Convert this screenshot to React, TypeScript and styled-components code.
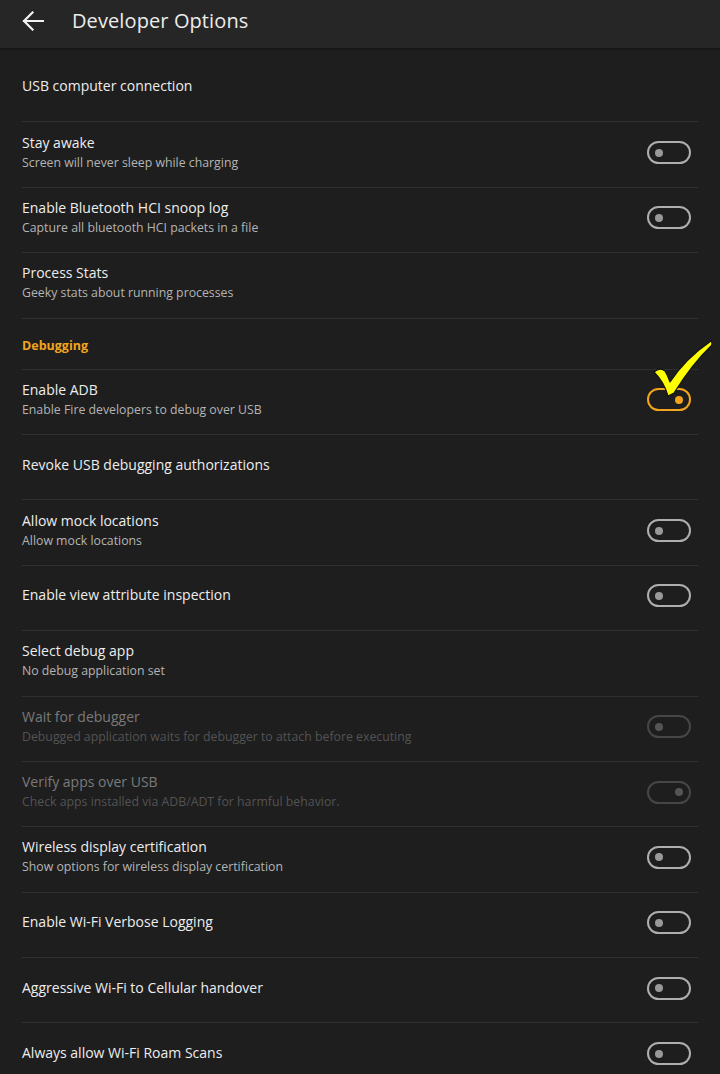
import React from "react";
import styled, { createGlobalStyle } from "styled-components";

const GlobalStyle = createGlobalStyle`
    html, body {
        margin: 0;
        padding: 0;
        background: #1e1e1e;
    }
    body {
        font-family: "Open Sans", "Noto Sans", sans-serif;
        -webkit-font-smoothing: antialiased;
    }
`

const Page = styled.div`
    width: 720px;
    height: 1074px;
    overflow: hidden;
    background: #1e1e1e;
`
const Header = styled.header`
    height: 48px;
    background: #262626;
    display: flex;
    align-items: center;
    box-shadow: 0 1px 2px rgba(0, 0, 0, 0.45);
    position: relative;
    z-index: 1;
`
const BackButton = styled.div`
    width: 72px;
    padding-left: 22px;
    box-sizing: border-box;
    display: flex;
    align-items: center;
    height: 100%;
    position: relative;
    top: -3px;
`
const Title = styled.h1`
    margin: 0;
    font-size: 20px;
    font-weight: 400;
    color: #ececec;
    letter-spacing: 0.1px;
    position: relative;
    top: -4px;
`
const List = styled.div`
    padding-top: 8px;
`
const Row = styled.div<{ $first?: boolean }>`
    margin: 0 22px;
    height: 65.4px;
    box-sizing: border-box;
    border-top: ${p => (p.$first ? "none" : "1px solid #303030")};
    padding-bottom: 4px;
    display: flex;
    align-items: center;
    justify-content: space-between;
`
const SectionHeader = styled.div`
    margin: 0 22px;
    height: 51px;
    box-sizing: border-box;
    border-top: 1px solid #303030;
    display: flex;
    align-items: flex-end;
    padding-bottom: 15px;
    font-size: 12.5px;
    font-weight: 700;
    color: #f3a41e;
`
const Texts = styled.div`
    display: flex;
    flex-direction: column;
    gap: 2px;
    position: relative;
    top: -1px;
`
const ItemTitle = styled.span<{ $disabled?: boolean }>`
    font-size: 14px;
    color: ${p => (p.$disabled ? "#7a7a7a" : "#ededed")};
    line-height: 19px;
`
const ItemSub = styled.span<{ $disabled?: boolean }>`
    font-size: 12.3px;
    color: ${p => (p.$disabled ? "#535353" : "#b4b4b4")};
    line-height: 17px;
`
const SwitchWrap = styled.div`
    position: relative;
    margin-right: 7px;
    display: flex;
`
const Switch = styled.div<{ $on?: boolean; $accent?: boolean; $disabled?: boolean }>`
    width: 44px;
    height: 23px;
    box-sizing: border-box;
    border-radius: 12px;
    border: 2px solid ${p => (p.$accent ? "#f3a41e" : p.$disabled ? "#464646" : "#aeaeae")};
    display: flex;
    align-items: center;
    justify-content: ${p => (p.$on ? "flex-end" : "flex-start")};
    padding: 0 6px;

    &::after {
        content: "";
        width: 8px;
        height: 8px;
        border-radius: 50%;
        background: ${p => (p.$accent ? "#f3a41e" : p.$disabled ? "#555" : "#999")};
    }
`
const CheckMark = styled.svg`
    position: absolute;
    left: 2px;
    top: -47px;
    width: 66px;
    height: 64px;
    overflow: visible;
`

type Item = {
    title: string;
    sub?: string;
    toggle?: "off" | "on" | "accent";
    disabled?: boolean;
    check?: boolean;
};

const before: Item[] = [
    { title: "USB computer connection" },
    { title: "Stay awake", sub: "Screen will never sleep while charging", toggle: "off" },
    { title: "Enable Bluetooth HCI snoop log", sub: "Capture all bluetooth HCI packets in a file", toggle: "off" },
    { title: "Process Stats", sub: "Geeky stats about running processes" },
];

const debugging: Item[] = [
    { title: "Enable ADB", sub: "Enable Fire developers to debug over USB", toggle: "accent", check: true },
    { title: "Revoke USB debugging authorizations" },
    { title: "Allow mock locations", sub: "Allow mock locations", toggle: "off" },
    { title: "Enable view attribute inspection", toggle: "off" },
    { title: "Select debug app", sub: "No debug application set" },
    { title: "Wait for debugger", sub: "Debugged application waits for debugger to attach before executing", toggle: "off", disabled: true },
    { title: "Verify apps over USB", sub: "Check apps installed via ADB/ADT for harmful behavior.", toggle: "on", disabled: true },
    { title: "Wireless display certification", sub: "Show options for wireless display certification", toggle: "off" },
    { title: "Enable Wi-Fi Verbose Logging", toggle: "off" },
    { title: "Aggressive Wi-Fi to Cellular handover", toggle: "off" },
    { title: "Always allow Wi-Fi Roam Scans", toggle: "off" },
];

const BackArrow = () => (
    <svg width="22" height="20" viewBox="0 0 22 20" fill="none">
        <path d="M21 10H2M10.5 1.5L2 10l8.5 8.5" stroke="#f2f2f2" strokeWidth="2.2" strokeLinecap="square" />
    </svg>
);

const SettingRow = ({ item, first }: { item: Item; first?: boolean }) => (
    <Row $first={first}>
        <Texts>
            <ItemTitle $disabled={item.disabled}>{item.title}</ItemTitle>
            {item.sub && <ItemSub $disabled={item.disabled}>{item.sub}</ItemSub>}
        </Texts>
        {item.toggle && (
            <SwitchWrap>
                <Switch $on={item.toggle !== "off"} $accent={item.toggle === "accent"} $disabled={item.disabled} />
                {item.check && (
                    <CheckMark viewBox="0 0 66 64">
                        {/* hand-drawn yellow tick over the toggle */}
                        <path
                            d="M5 31 Q11 26 16 30 Q19 35 21 41 Q36 18 62 0 Q64 3 62 5 Q44 22 25 52 L19 55 Q15 41 5 31 Z"
                            fill="#ffff00"
                            stroke="#151515"
                            strokeWidth="1.2"
                            strokeLinejoin="round"
                        />
                    </CheckMark>
                )}
            </SwitchWrap>
        )}
    </Row>
);

export default function App() {
    return (
        <Page>
            <GlobalStyle />
            <Header>
                <BackButton>
                    <BackArrow />
                </BackButton>
                <Title>Developer Options</Title>
            </Header>
            <List>
                {before.map((item, i) => (
                    <SettingRow key={item.title} item={item} first={i === 0} />
                ))}
                <SectionHeader>Debugging</SectionHeader>
                {debugging.map(item => (
                    <SettingRow key={item.title} item={item} />
                ))}
            </List>
        </Page>
    );
}
